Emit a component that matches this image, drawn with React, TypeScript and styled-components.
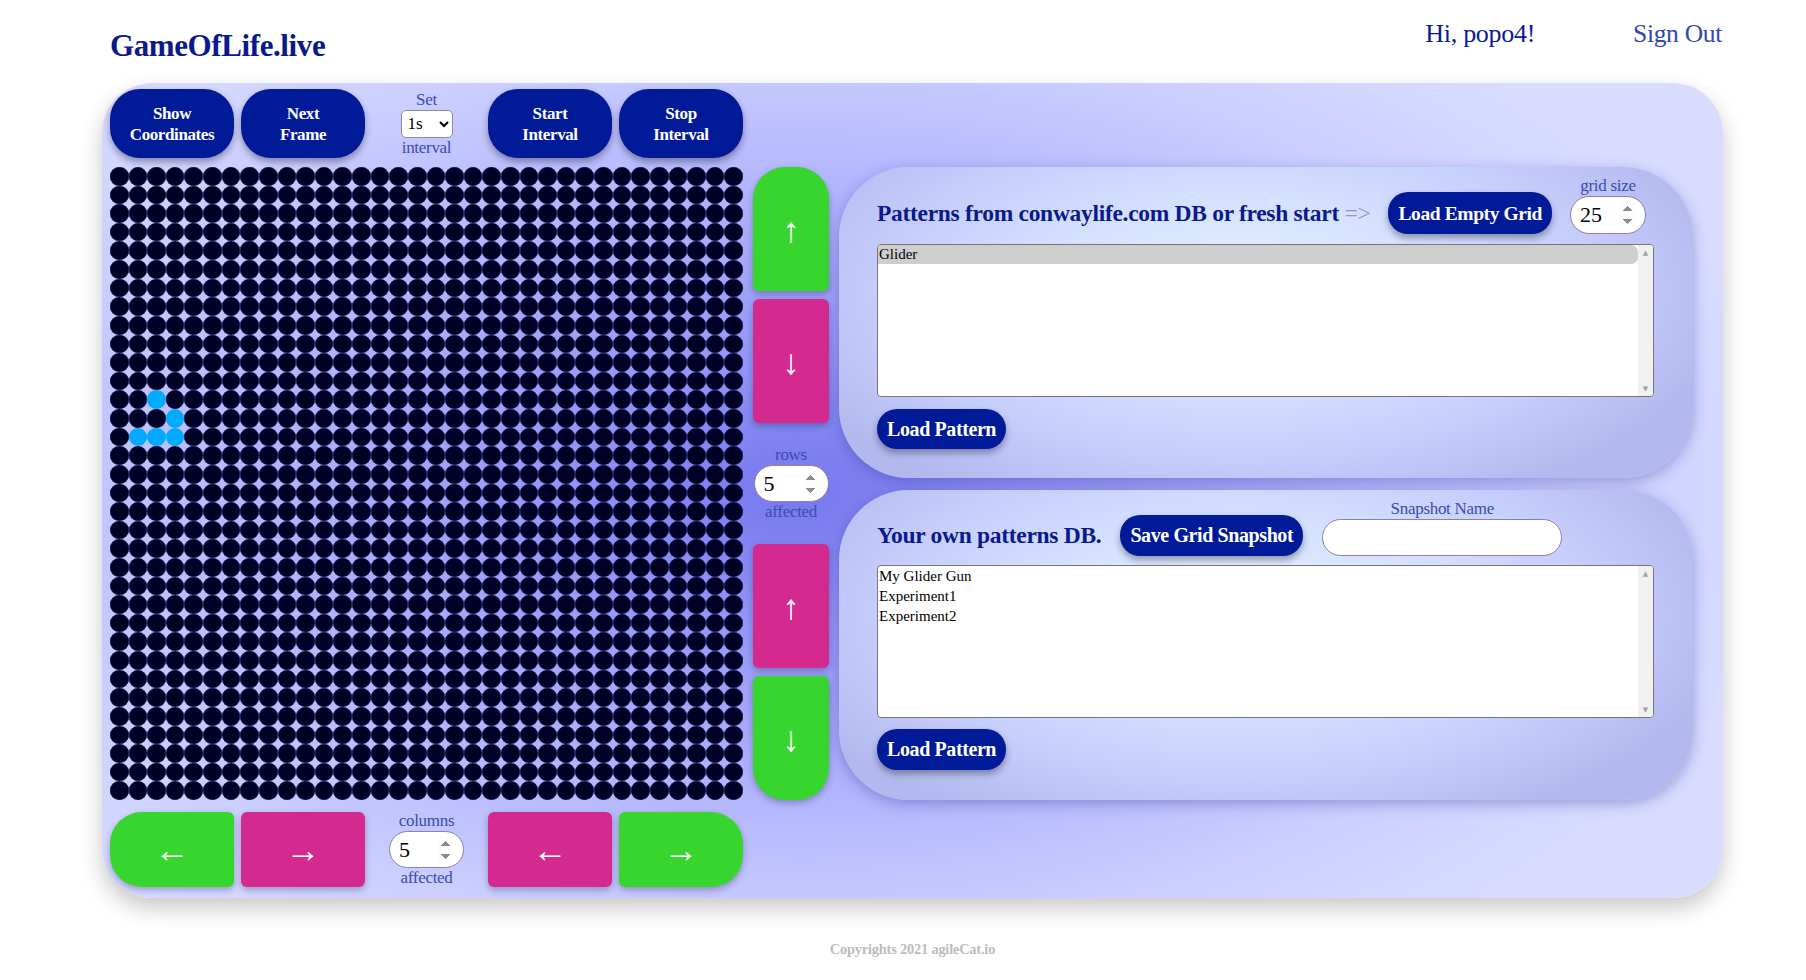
import React from "react";
import styled, { createGlobalStyle } from "styled-components";

const GlobalStyle = createGlobalStyle`
  html, body { margin: 0; padding: 0; background: #ffffff; }
  body { font-family: "Liberation Serif", "Times New Roman", serif; }
  * { box-sizing: border-box; }
  input[type="number"]::-webkit-inner-spin-button,
  input[type="number"]::-webkit-outer-spin-button {
    opacity: 1;
  }
`;

const Page = styled.div`
  width: 1806px;
  height: 980px;
  overflow: hidden;
`;

const Header = styled.header`
  display: flex;
  justify-content: space-between;
  align-items: flex-start;
  height: 83px;
  padding: 0 84px 0 110px;
`;

const Title = styled.h1`
  margin: 0;
  padding-top: 28px;
  font-size: 31px;
  line-height: 36px;
  font-weight: 700;
  color: #0a1a8c;
  letter-spacing: -0.4px;
`;

const UserNav = styled.nav`
  display: flex;
  gap: 98px;
  padding-top: 19px;
`;

const NavText = styled.span<{ $muted?: boolean }>`
  font-size: ${(p) => (p.$muted ? "25.5px" : "26px")};
  line-height: 30px;
  color: ${(p) => (p.$muted ? "#3246b4" : "#0a1a96")};
  letter-spacing: -0.3px;
`;

const Board = styled.main`
  margin-left: 102px;
  width: 1621px;
  height: 815px;
  border-radius: 50px;
  padding: 6px 0 10px 8px;
  background: radial-gradient(
    ellipse 62% 70% at 43% 50%,
    #7577ee 0%,
    #9597f8 25%,
    #b4b7fd 55%,
    #cdd0ff 80%,
    #d9dcff 100%
  );
  box-shadow: 0 10px 22px rgba(0, 0, 0, 0.22);
  display: grid;
  grid-template-columns: 633px 76px 854px;
  grid-template-rows: 69px 633px 76px;
  column-gap: 10px;
  row-gap: 9px;
`;

const Toolbar = styled.div<{ $bottom?: boolean }>`
  display: grid;
  grid-template-columns: 124px 124px 109px 124px 124px;
  column-gap: 7px;
  grid-column: 1;
  margin-top: ${(p) => (p.$bottom ? "3px" : "0")};
`;

const NavyButton = styled.button`
  border: none;
  border-radius: 30px;
  background: #011b98;
  color: #ffffff;
  font-family: "Liberation Serif", serif;
  font-weight: 700;
  font-size: 17px;
  line-height: 21px;
  letter-spacing: -0.4px;
  box-shadow: 0 4px 7px rgba(0, 0, 20, 0.35);
  padding: 0 4px;
  cursor: pointer;
`;

const PillButton = styled(NavyButton)<{ $h: number; $fs: number }>`
  height: ${(p) => p.$h}px;
  border-radius: 20px;
  font-size: ${(p) => p.$fs}px;
  padding: 0 10px;
  white-space: nowrap;
  flex: none;
`;

const StackGroup = styled.div`
  display: flex;
  flex-direction: column;
  align-items: center;
  justify-content: center;
  gap: 1px;
`;

const SmallLabel = styled.span`
  font-size: 17px;
  line-height: 18px;
  color: #3a4cb2;
  letter-spacing: -0.3px;
`;

const IntervalSelect = styled.select`
  width: 52px;
  height: 28px;
  border: 1px solid #8f8a99;
  border-radius: 5px;
  background: #fff;
  font-family: "Liberation Serif", serif;
  font-size: 17px;
  padding: 0 2px;
  color: #000;
`;

const NumberInput = styled.input<{ $w: number; $h: number }>`
  width: ${(p) => p.$w}px;
  height: ${(p) => p.$h}px;
  border-radius: ${(p) => p.$h / 2}px;
  border: 1px solid #8d7fa6;
  background: #fff;
  font-family: "Liberation Serif", serif;
  font-size: 22px;
  padding: 0 10px 0 9px;
  color: #000;
  outline: none;
`;

const LifeGrid = styled.div`
  grid-column: 1;
  display: grid;
  grid-template-columns: repeat(34, 1fr);
  grid-template-rows: repeat(34, 1fr);
  width: 633px;
  height: 633px;
`;

const Cell = styled.div<{ $alive: boolean }>`
  border-radius: 50%;
  background: ${(p) => (p.$alive ? "#00aaff" : "#000026")};
  box-shadow: ${(p) => (p.$alive ? "none" : "inset 0 0 0 0.6px #2a2a66")};
`;

const ArrowColumn = styled.div`
  grid-column: 2;
  display: grid;
  grid-template-rows: 124px 124px 1fr 124px 124px;
  row-gap: 8px;
`;

type Round = "top" | "bottom" | "left" | "right" | "none";

const radiusFor = (r: Round) => {
  const big = "32px";
  const sm = "6px";
  switch (r) {
    case "top":
      return `${big} ${big} ${sm} ${sm}`;
    case "bottom":
      return `${sm} ${sm} ${big} ${big}`;
    case "left":
      return `${big} ${sm} ${sm} ${big}`;
    case "right":
      return `${sm} ${big} ${big} ${sm}`;
    default:
      return sm;
  }
};

const ArrowButton = styled.button<{ $green: boolean; $round: Round }>`
  border: none;
  background: ${(p) => (p.$green ? "#37d52e" : "#d42a8f")};
  color: #ffffff;
  border-radius: ${(p) => radiusFor(p.$round)};
  font-family: "Liberation Sans", "DejaVu Sans", sans-serif;
  font-size: 35px;
  line-height: 1;
  box-shadow: 0 3px 7px rgba(0, 0, 40, 0.28);
  cursor: pointer;
  padding: 0;
`;

const PanelStack = styled.div`
  grid-column: 3;
  display: grid;
  grid-template-rows: 1fr 1fr;
  row-gap: 12px;
`;

const Panel = styled.section`
  border-radius: 70px;
  padding: 10px 38px 0 38px;
  background: radial-gradient(
    ellipse 58% 75% at 47% 40%,
    #e3f2ff 0%,
    #d5e1ff 40%,
    #c4cbfb 75%,
    #b3b9ee 100%
  );
  box-shadow: 0 4px 14px rgba(50, 50, 150, 0.35);
  display: flex;
  flex-direction: column;
`;

const PanelHeader = styled.div<{ $gap: number }>`
  display: flex;
  align-items: flex-end;
  gap: ${(p) => p.$gap}px;
`;

const Heading = styled.h2<{ $h: number }>`
  margin: 0;
  font-size: 23.5px;
  line-height: ${(p) => p.$h}px;
  font-weight: 700;
  color: #0a1a8c;
  letter-spacing: -0.3px;
  white-space: nowrap;
`;

const Hint = styled.span`
  font-weight: 400;
  color: #8a90e4;
`;

const TextInput = styled.input`
  width: 240px;
  height: 37px;
  border-radius: 19px;
  border: 1px solid #8d7fa6;
  background: #fff;
  font-family: "Liberation Serif", serif;
  font-size: 18px;
  padding: 0 14px;
  outline: none;
`;

const ListBox = styled.div<{ $mt: number }>`
  margin-top: ${(p) => p.$mt}px;
  width: 777px;
  height: 153px;
  border: 1px solid #767676;
  border-radius: 4px;
  background: #fff;
  display: flex;
  overflow: hidden;
`;

const ListItems = styled.div`
  flex: 1;
  font-family: "Liberation Serif", serif;
  font-size: 15px;
`;

const ScrollTrack = styled.div`
  width: 15px;
  flex: none;
  background: #f1f1f1;
  display: flex;
  flex-direction: column;
  justify-content: space-between;
  align-items: center;
  padding: 3px 0 2px;
  font-family: "DejaVu Sans", sans-serif;
  font-size: 7px;
  line-height: 10px;
  color: #a3a3a3;
`;

const ListItem = styled.div<{ $selected?: boolean }>`
  line-height: ${(p) => (p.$selected ? "19px" : "20px")};
  padding-left: 1px;
  color: #000;
  background: ${(p) => (p.$selected ? "#cecece" : "transparent")};
  border-radius: 0 7px 7px 0;
`;

const LoadRow = styled.div<{ $mt: number }>`
  margin-top: ${(p) => p.$mt}px;
  display: flex;
`;

const Footer = styled.footer`
  margin-left: 102px;
  width: 1621px;
  margin-top: 42px;
  text-align: center;
  font-size: 14.4px;
  line-height: 18px;
  font-weight: 700;
  color: #bcbcbc;
  letter-spacing: -0.2px;
`;

const SIZE = 34;
const alive = new Set(["12-2", "13-3", "14-1", "14-2", "14-3"]);

function PatternList({ items, selected, mt }: { items: string[]; selected?: string; mt: number }) {
  return (
    <ListBox role="listbox" $mt={mt}>
      <ListItems>
        {items.map((it) => (
          <ListItem key={it} role="option" $selected={it === selected}>
            {it}
          </ListItem>
        ))}
      </ListItems>
      <ScrollTrack aria-hidden>
        <span>▲</span>
        <span>▼</span>
      </ScrollTrack>
    </ListBox>
  );
}

export default function App() {
  const cells = [];
  for (let r = 0; r < SIZE; r++) {
    for (let c = 0; c < SIZE; c++) {
      cells.push(<Cell key={`${r}-${c}`} $alive={alive.has(`${r}-${c}`)} />);
    }
  }
  return (
    <Page>
      <GlobalStyle />
      <Header>
        <Title>GameOfLife.live</Title>
        <UserNav>
          <NavText>Hi, popo4!</NavText>
          <NavText $muted>Sign Out</NavText>
        </UserNav>
      </Header>

      <Board>
        <Toolbar>
          <NavyButton>
            Show
            <br />
            Coordinates
          </NavyButton>
          <NavyButton>
            Next
            <br />
            Frame
          </NavyButton>
          <StackGroup>
            <SmallLabel>Set</SmallLabel>
            <IntervalSelect defaultValue="1s">
              <option value="1s">1s</option>
              <option value="2s">2s</option>
              <option value="5s">5s</option>
            </IntervalSelect>
            <SmallLabel>interval</SmallLabel>
          </StackGroup>
          <NavyButton>
            Start
            <br />
            Interval
          </NavyButton>
          <NavyButton>
            Stop
            <br />
            Interval
          </NavyButton>
        </Toolbar>
        <div />
        <div />

        <LifeGrid>{cells}</LifeGrid>

        <ArrowColumn>
          <ArrowButton $green $round="top">↑</ArrowButton>
          <ArrowButton $green={false} $round="none">↓</ArrowButton>
          <StackGroup>
            <SmallLabel>rows</SmallLabel>
            <NumberInput type="number" defaultValue={5} $w={75} $h={37} />
            <SmallLabel>affected</SmallLabel>
          </StackGroup>
          <ArrowButton $green={false} $round="none">↑</ArrowButton>
          <ArrowButton $green $round="bottom">↓</ArrowButton>
        </ArrowColumn>

        <PanelStack>
          <Panel>
            <PanelHeader $gap={18}>
              <Heading $h={42}>
                Patterns from conwaylife.com DB or fresh start <Hint>=&gt;</Hint>
              </Heading>
              <PillButton $h={42} $fs={19.5}>Load Empty Grid</PillButton>
              <StackGroup>
                <SmallLabel>grid size</SmallLabel>
                <NumberInput type="number" defaultValue={25} $w={76} $h={38} />
              </StackGroup>
            </PanelHeader>
            <PatternList items={["Glider"]} selected="Glider" mt={10} />
            <LoadRow $mt={12}>
              <PillButton $h={40} $fs={20}>Load Pattern</PillButton>
            </LoadRow>
          </Panel>

          <Panel>
            <PanelHeader $gap={19}>
              <Heading $h={41}>Your own patterns DB.</Heading>
              <PillButton $h={41} $fs={20}>Save Grid Snapshot</PillButton>
              <StackGroup>
                <SmallLabel>Snapshot Name</SmallLabel>
                <TextInput type="text" />
              </StackGroup>
            </PanelHeader>
            <PatternList items={["My Glider Gun", "Experiment1", "Experiment2"]} mt={9} />
            <LoadRow $mt={11}>
              <PillButton $h={41} $fs={20}>Load Pattern</PillButton>
            </LoadRow>
          </Panel>
        </PanelStack>

        <Toolbar $bottom>
          <ArrowButton $green $round="left">←</ArrowButton>
          <ArrowButton $green={false} $round="none">→</ArrowButton>
          <StackGroup>
            <SmallLabel>columns</SmallLabel>
            <NumberInput type="number" defaultValue={5} $w={75} $h={37} />
            <SmallLabel>affected</SmallLabel>
          </StackGroup>
          <ArrowButton $green={false} $round="none">←</ArrowButton>
          <ArrowButton $green $round="right">→</ArrowButton>
        </Toolbar>
      </Board>

      <Footer>Copyrights 2021 agileCat.io</Footer>
    </Page>
  );
}
